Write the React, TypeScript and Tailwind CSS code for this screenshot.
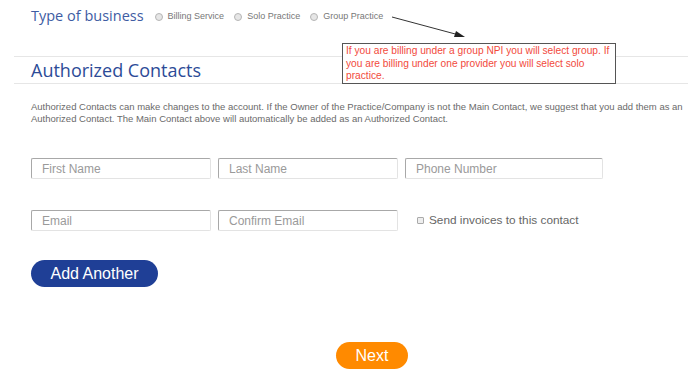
import React from "react";

const Radio = ({ label }: { label: string }) => (
  <span className="flex items-center gap-[5px]">
    <span className="inline-block w-[8px] h-[8px] rounded-full border border-[#b5b5b5] bg-[#e6e6e6]" />
    <span className="text-[9px] text-[#777]">{label}</span>
  </span>
);

const Field = ({ ph, w }: { ph: string; w: string }) => (
  <div
    className={`${w} h-[21px] flex items-center pl-[10px] rounded-[2px] border border-t-[#a8a8a8] border-l-[#a8a8a8] border-r-[#e3e3e3] border-b-[#e3e3e3] text-[12px] text-[#9a9a9a]`}
  >
    {ph}
  </div>
);

export default function App() {
  return (
    <div
      className="relative w-[688px] h-[379px] bg-white overflow-hidden"
      style={{ fontFamily: '"Liberation Sans", Arial, sans-serif' }}
    >
      {/* Type of business row */}
      <div className="flex items-center pl-[31px] pt-[5px] h-[26px]">
        <span
          className="text-[14.5px] text-[#3e5ca3] mr-[11px]"
          style={{ fontFamily: '"Open Sans", sans-serif' }}
        >
          Type of business
        </span>
        <div className="flex items-center gap-[10px] pt-[2px]">
          <Radio label="Billing Service" />
          <Radio label="Solo Practice" />
          <Radio label="Group Practice" />
        </div>
      </div>

      {/* Arrow */}
      <svg className="absolute left-0 top-0" width="688" height="60">
        <line x1="392" y1="17" x2="459" y2="35" stroke="#333" strokeWidth="1" />
        <polygon points="465,37 456,31 454,37" fill="#222" />
      </svg>

      {/* Section heading */}
      <div className="ml-[14px] mt-[30px] h-[28px] border-y border-[#e6e6e6] flex items-center pl-[17px]">
        <span
          className="text-[18px] text-[#2c4b97]"
          style={{ fontFamily: '"Open Sans", sans-serif' }}
        >
          Authorized Contacts
        </span>
      </div>

      {/* Tooltip */}
      <div className="absolute left-[342px] top-[43px] w-[274px] h-[41px] bg-white border border-[#555] px-[3px] pt-[1px] text-[10.2px] leading-[12.5px] text-[#f24a3c]">
        If you are billing under a group NPI you will select group. If you are billing under one provider you will select solo practice.
      </div>

      {/* Paragraph */}
      <p className="pl-[31px] pr-[4px] mt-[17px] text-[9.5px] leading-[12px] text-[#6a6a6a]">
        Authorized Contacts can make changes to the account. If the Owner of the Practice/Company is not the Main Contact, we suggest that you add them as an Authorized Contact. The Main Contact above will automatically be added as an Authorized Contact.
      </p>

      {/* Inputs */}
      <div className="pl-[31px] mt-[33px] flex gap-[7px]">
        <Field ph="First Name" w="w-[180px]" />
        <Field ph="Last Name" w="w-[180px]" />
        <Field ph="Phone Number" w="w-[198px]" />
      </div>
      <div className="pl-[31px] mt-[31px] flex items-center gap-[7px]">
        <Field ph="Email" w="w-[180px]" />
        <Field ph="Confirm Email" w="w-[180px]" />
        <span className="ml-[12px] flex items-center gap-[5px]">
          <span className="inline-block w-[7px] h-[7px] rounded-[1px] border border-[#aaa] bg-[#eee]" />
          <span className="text-[11.8px] text-[#666]">Send invoices to this contact</span>
        </span>
      </div>

      {/* Add Another */}
      <div className="pl-[31px] mt-[29px]">
        <button className="w-[127px] h-[27px] rounded-full bg-[#1f3f96] text-white text-[16px]">
          Add Another
        </button>
      </div>

      {/* Next */}
      <div className="flex pl-[336px] mt-[55px]">
        <button className="w-[72px] h-[27px] rounded-full bg-[#ff8a00] text-white text-[16px]">
          Next
        </button>
      </div>
    </div>
  );
}
